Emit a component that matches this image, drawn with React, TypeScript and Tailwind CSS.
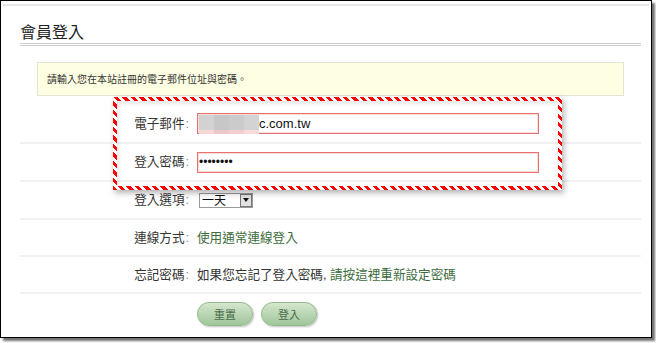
import React from 'react';

const cjk = { fontFamily: '"Noto Sans CJK TC", "Liberation Sans", sans-serif' };

const Row = ({ label, h, children }: { label: string; h: string; children: React.ReactNode }) => (
  <div className={`ml-[19px] w-[621px] ${h} flex items-center border-b-2 border-[#f1f1f1]`}>
    <div className="w-[169px] text-right text-[12.6px] text-[#333] leading-none">
      {label}
      <span className="text-[#888] font-['Liberation_Sans'] pl-[1px]">:</span>
    </div>
    <div className="ml-[8px] flex items-center">{children}</div>
  </div>
);

export default function App() {
  return (
    <div className="w-[656px] h-[343px] bg-white" style={cjk}>
      <div className="relative w-[652px] h-[338px] border border-black bg-white shadow-[3px_3px_2px_rgba(0,0,0,0.55)]">
        {/* top faint rule */}
        <div className="mt-[3px] mx-[2px] h-[2px] bg-[#e6e6e6]" />

        {/* title */}
        <div className="mt-[15px] ml-[19px] h-[20px] flex items-center text-[16px] text-[#222] leading-none">
          會員登入
        </div>
        <div className="mt-[2px] ml-[19px] w-[621px] border-t-[3px] border-double border-[#cfcfcf]" />

        {/* notice */}
        <div className="mt-[16px] ml-[36px] w-[587px] h-[34px] flex items-center pl-[9px] border border-[#e4e4d2] bg-[#fefee2] text-[10px] text-[#333] leading-none">
          請輸入您在本站註冊的電子郵件位址與密碼。
        </div>

        <div className="mt-[9px]">
          <Row label="電子郵件" h="h-[39px]">
            <div className="w-[342px] h-[21px] border border-[#e67272] shadow-[inset_0_0_0_1px_#fbdada] flex items-center bg-white">
              <div className="flex flex-col ml-[1px] mt-[1px] self-start">
                <div className="flex h-[15px]">
                  <div className="w-[15px] bg-[#d2d2d2]" />
                  <div className="w-[15px] bg-[#c7c7c7]" />
                  <div className="w-[15px] bg-[#cbcbcb]" />
                  <div className="w-[15px] bg-[#d3d3d3]" />
                </div>
                <div className="flex h-[4px]">
                  <div className="w-[15px] bg-[#f6d8d8]" />
                  <div className="w-[15px] bg-[#ecc9c9]" />
                  <div className="w-[15px] bg-[#f2d0d0]" />
                  <div className="w-[15px] bg-[#f8dcdc]" />
                </div>
              </div>
              <span className="font-['Liberation_Sans'] text-[13px] text-[#111] leading-none">c.com.tw</span>
            </div>
          </Row>
          <Row label="登入密碼" h="h-[38px]">
            <div className="w-[342px] h-[21px] border border-[#e67272] shadow-[inset_0_0_0_1px_#fbdada] flex items-center bg-white pl-[1px]">
              <span className="font-['Liberation_Sans'] text-[12px] text-[#111] leading-none">••••••••</span>
            </div>
          </Row>
          <Row label="登入選項" h="h-[38px]">
            <div className="w-[54px] h-[15px] border border-[#999] flex items-center justify-between bg-white ml-[2px]">
              <span className="text-[12px] leading-none pl-[2px] text-[#111]">一天</span>
              <div className="w-[12px] h-[13px] border border-[#777] bg-[#e2e2e2] flex items-center justify-center">
                <svg width="6" height="4" viewBox="0 0 6 4">
                  <path d="M0 0h6L3 4z" fill="#111" />
                </svg>
              </div>
            </div>
          </Row>
          <Row label="連線方式" h="h-[37px]">
            <span className="text-[12.6px] leading-none text-[#3c6c3c]">使用通常連線登入</span>
          </Row>
          <Row label="忘記密碼" h="h-[37px]">
            <span className="text-[12.6px] leading-none text-[#333]">
              如果您忘記了登入密碼<span className="font-['Liberation_Sans']">, </span>
              <span className="text-[#3c6c3c]">請按這裡重新設定密碼</span>
            </span>
          </Row>
        </div>

        {/* buttons */}
        <div className="mt-[8px] ml-[196px] flex gap-[8px]">
          {['重置', '登入'].map((t) => (
            <button
              key={t}
              className="w-[56px] h-[24px] rounded-full border border-[#93b98f] bg-gradient-to-b from-[#d4e7cd] to-[#9fc69b] shadow-[1px_1px_2px_rgba(0,0,0,0.25)] text-[11px] leading-none text-[#4c6b4c] flex items-center justify-center"
            >
              {t}
            </button>
          ))}
        </div>

        {/* annotation: red dashed highlight */}
        <div className="pointer-events-none absolute left-[112px] top-[96px] w-[449px] h-[93px] border-[4px] border-solid [border-image:repeating-linear-gradient(45deg,#f00_0_3px,#fff_3px_6px)_4] shadow-[2px_3px_6px_rgba(0,0,0,0.3),inset_1px_2px_5px_rgba(0,0,0,0.12)]" />
      </div>
    </div>
  );
}
